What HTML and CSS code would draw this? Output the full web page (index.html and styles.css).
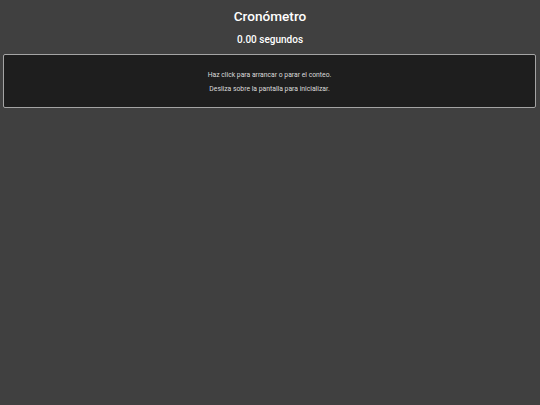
FILE: index.html
```html
<!DOCTYPE html>
<html lang="es">
<head>
<meta charset="utf-8">
<title>Cronómetro</title>
<link rel="stylesheet" href="styles.css">
</head>
<body>
<header class="header">
  <h1 class="title">Cronómetro</h1>
  <div class="time">0.00 segundos</div>
</header>
<section class="panel">
  <p class="hint">Haz click para arrancar o parar el conteo.</p>
  <p class="hint">Desliza sobre la pantalla para inicializar.</p>
</section>
</body>
</html>
```
FILE: styles.css
```css
html, body {
  margin: 0;
  padding: 0;
  background: #404040;
  height: 100%;
}
body {
  font-family: Roboto, "Liberation Sans", sans-serif;
  color: #ffffff;
}
.header {
  padding-top: 6px;
  text-align: center;
}
.title {
  margin: 0;
  font-size: 13.6px;
  font-weight: 500;
  line-height: 20px;
}
.time {
  margin-top: 7px;
  font-size: 10px;
  font-weight: 500;
  line-height: 14px;
}
.panel {
  margin: 7px 4px 0 3px;
  border: 1px solid #a4a4a4;
  border-radius: 2px;
  background: #1e1e1e;
  padding: 13px 0 11px;
  text-align: center;
}
.hint {
  margin: 0;
  font-size: 6.8px;
  line-height: 14px;
  color: #dcdcdc;
}
```
